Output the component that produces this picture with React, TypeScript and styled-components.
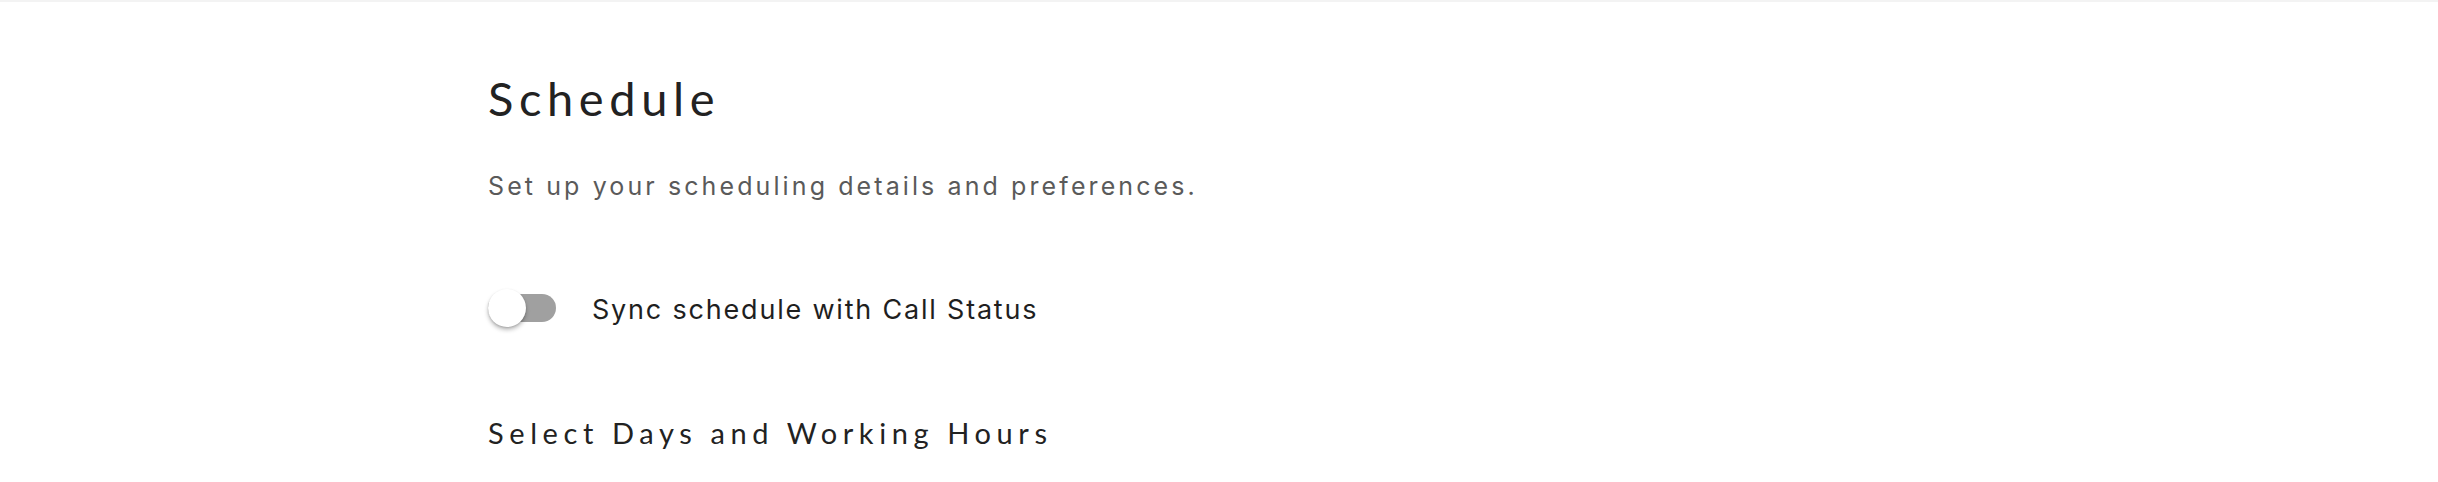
import React, { useState } from "react";
import styled, { createGlobalStyle } from "styled-components";

const GlobalStyle = createGlobalStyle`
  html, body {
    margin: 0;
    padding: 0;
    background: #ffffff;
  }
`;

const Page = styled.div`
  width: 2438px;
  height: 482px;
  box-sizing: border-box;
  border-top: 2px solid #f3f3f3;
  padding: 68px 0 0 488px;
  display: flex;
  flex-direction: column;
  align-items: flex-start;
`;

const Title = styled.h1`
  margin: 0;
  font-family: "Lato", "Liberation Sans", sans-serif;
  font-weight: 400;
  font-size: 47px;
  letter-spacing: 5.6px;
  line-height: 56px;
  color: #222222;
`;

const Subtitle = styled.p`
  margin: 43px 0 0;
  font-family: "Inter", "Liberation Sans", sans-serif;
  font-weight: 400;
  font-size: 25px;
  letter-spacing: 3.1px;
  line-height: 34px;
  color: #5a5a5a;
`;

const ToggleRow = styled.label`
  margin-top: 86px;
  height: 38px;
  display: flex;
  align-items: center;
  gap: 36px;
  cursor: pointer;
`;

const Track = styled.span<{ $on: boolean }>`
  position: relative;
  display: inline-block;
  width: 68px;
  height: 28px;
  border-radius: 14px;
  background: ${(p) => (p.$on ? "#7c7c7c" : "#a0a0a0")};
`;

const Knob = styled.span<{ $on: boolean }>`
  position: absolute;
  top: -5px;
  left: ${(p) => (p.$on ? "30px" : "0px")};
  width: 38px;
  height: 38px;
  border-radius: 50%;
  background: #ffffff;
  box-shadow: 0 3px 4px rgba(0, 0, 0, 0.25), 0 1px 2px rgba(0, 0, 0, 0.15);
`;

const ToggleLabel = styled.span`
  padding-top: 3px;
  font-family: "Inter", "Liberation Sans", sans-serif;
  font-size: 27px;
  letter-spacing: 1.8px;
  line-height: 38px;
  color: #1f1f1f;
`;

const SectionTitle = styled.h2`
  margin: 88px 0 0;
  font-family: "Lato", "Liberation Sans", sans-serif;
  font-weight: 400;
  font-size: 29px;
  letter-spacing: 5.6px;
  line-height: 36px;
  color: #222222;
`;

export default function App() {
  const [on, setOn] = useState(false);
  return (
    <>
      <GlobalStyle />
      <Page>
        <Title>Schedule</Title>
        <Subtitle>Set up your scheduling details and preferences.</Subtitle>
        <ToggleRow onClick={() => setOn(!on)}>
          <Track $on={on}>
            <Knob $on={on} />
          </Track>
          <ToggleLabel>Sync schedule with Call Status</ToggleLabel>
        </ToggleRow>
        <SectionTitle>Select Days and Working Hours</SectionTitle>
      </Page>
    </>
  );
}
